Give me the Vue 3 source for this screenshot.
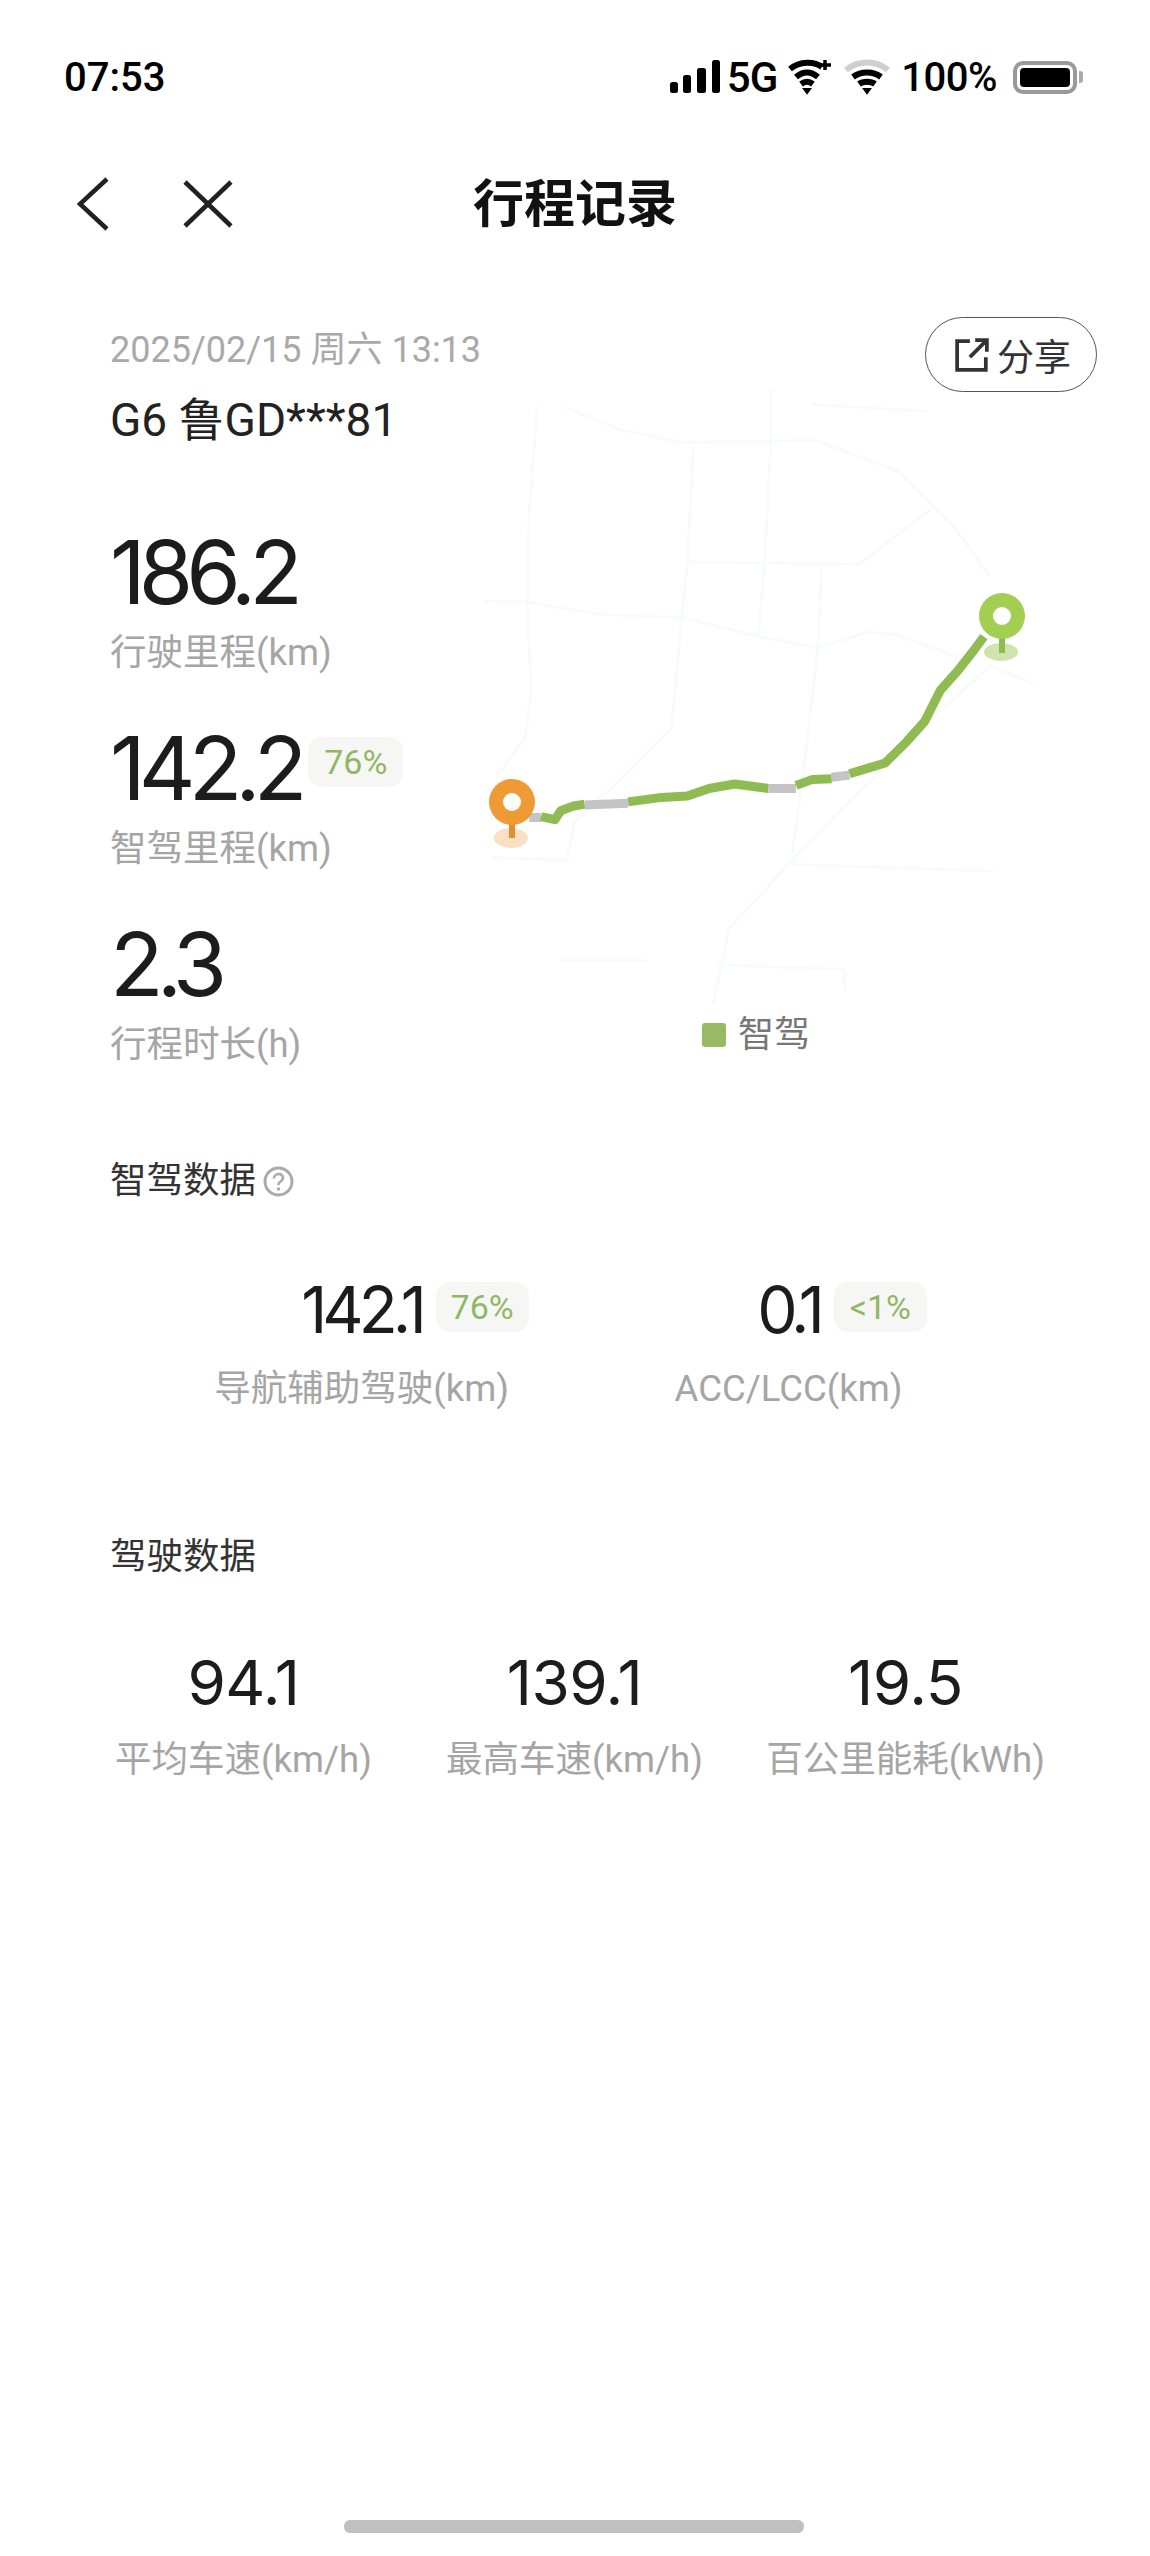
<script setup>
// 路线坐标按地图放大图取点，换算到 620x700 的 svg
const toPts = (list) =>
  list.map(([x, y]) => `${(x / 2.529).toFixed(1)},${(y / 2.24).toFixed(1)}`).join(" ");

const roads = [
  [[195, 60], [175, 300], [170, 500], [180, 700], [165, 800], [100, 880]],
  [[60, 495], [170, 497], [360, 525], [560, 532], [760, 575], [905, 600], [1030, 565], [1100, 570], [1260, 620]],
  [[265, 60], [400, 110], [560, 140], [900, 135], [1110, 205], [1250, 330], [1340, 440]],
  [[590, 150], [575, 410], [560, 540], [535, 780], [400, 900], [290, 990], [270, 1075], [80, 1070]],
  [[785, 20], [785, 160], [770, 410], [755, 570]],
  [[575, 408], [1010, 412], [1190, 290]],
  [[915, 415], [905, 600], [870, 870], [840, 1060]],
  [[1450, 680], [1340, 640], [1180, 770], [840, 1075], [680, 1230], [640, 1400]],
  [[840, 1085], [1350, 1100]],
  [[250, 1300], [470, 1300]],
  [[650, 1310], [970, 1320], [975, 1370]],
  [[890, 55], [1180, 70]],
].map(toPts);

const route = [
  { color: "#c4c4c4", pts: [[175, 980], [205, 980]] },
  { color: "#8fbb52", pts: [[205, 978], [240, 985], [255, 965], [285, 955], [315, 950]] },
  { color: "#c4c4c4", pts: [[315, 952], [425, 948]] },
  { color: "#8fbb52", pts: [[425, 945], [510, 935], [575, 932], [630, 915], [695, 905], [780, 915]] },
  { color: "#c4c4c4", pts: [[780, 915], [850, 915]] },
  { color: "#8fbb52", pts: [[850, 908], [890, 895], [940, 893]] },
  { color: "#c4c4c4", pts: [[940, 890], [985, 885]] },
  {
    color: "#8fbb52",
    pts: [[985, 882], [1030, 870], [1075, 858], [1130, 810], [1175, 765], [1215, 695], [1260, 650], [1300, 605], [1325, 575]],
  },
].map((seg) => ({ color: seg.color, points: toPts(seg.pts) }));

const tripStats = [
  { value: "186.2", label: "行驶里程(km)" },
  { value: "142.2", label: "智驾里程(km)", badge: "76%" },
  { value: "2.3", label: "行程时长(h)" },
];

const smartData = [
  { value: "142.1", label: "导航辅助驾驶(km)", badge: "76%" },
  { value: "0.1", label: "ACC/LCC(km)", badge: "<1%" },
];

const driveData = [
  { value: "94.1", label: "平均车速(km/h)" },
  { value: "139.1", label: "最高车速(km/h)" },
  { value: "19.5", label: "百公里能耗(kWh)" },
];
</script>

<template>
  <div class="page">
    <header class="status">
      <span class="time">07:53</span>
      <div class="status-right">
        <svg class="signal" width="50" height="34" viewBox="0 0 50 34">
          <rect x="0" y="22" width="8" height="11" rx="2.5" />
          <rect x="13" y="15" width="8" height="18" rx="2.5" />
          <rect x="27" y="8" width="9" height="25" rx="2.5" />
          <rect x="42" y="0" width="8" height="33" rx="2.5" />
        </svg>
        <span class="net">5G</span>
        <svg class="wifi-plus" width="44" height="36" viewBox="0 0 44 36" fill="none" stroke="#000" stroke-width="6">
          <path d="M2 10 C12 2 26 2 34 8" />
          <path d="M8 18 C15 12 23 12 30 18" />
          <path d="M13 25 C17 22 21 22 25 25" />
          <path d="M16 30 L19 34 L22 30 Z" fill="#000" stroke-width="2" />
          <path d="M37 1 V11 M32 6 H43" stroke-width="3.5" />
        </svg>
        <svg class="wifi" width="46" height="36" viewBox="0 0 46 36" fill="none" stroke-width="6">
          <path d="M2 11 C14 1 32 1 44 11" stroke="#cfcfcf" />
          <path d="M9 18 C17 12 29 12 37 18" stroke="#000" />
          <path d="M15 25 C19 22 27 22 31 25" stroke="#000" />
          <path d="M20 30 L23 34 L26 30 Z" fill="#000" stroke="#000" stroke-width="2" />
        </svg>
        <span class="percent">100%</span>
        <div class="battery"><i></i></div>
      </div>
    </header>

    <nav class="nav">
      <div class="nav-left">
        <svg width="32" height="54" viewBox="0 0 32 54" fill="none" stroke="#222" stroke-width="4.5">
          <path d="M30 2 L3 27 L30 52" />
        </svg>
        <svg width="50" height="48" viewBox="0 0 50 48" fill="none" stroke="#222" stroke-width="4.5">
          <path d="M2 2 L48 46 M48 2 L2 46" />
        </svg>
      </div>
      <h1>行程记录</h1>
    </nav>

    <section class="trip">
      <svg class="map" width="620" height="700" viewBox="0 0 620 700" fill="none">
        <polyline v-for="(r, i) in roads" :key="i" :points="r" stroke="#f9fbfb" stroke-width="3" />
        <polyline
          v-for="(seg, i) in route"
          :key="'s' + i"
          :points="seg.points"
          :stroke="seg.color"
          stroke-width="9"
          stroke-linejoin="round"
        />
        <ellipse cx="51" cy="458" rx="17" ry="10" fill="#f9dfc4" />
        <rect x="49" y="442" width="6" height="16" fill="#e08f32" />
        <circle cx="52" cy="422" r="23" fill="#f09a35" />
        <circle cx="52" cy="422" r="9" fill="#fff" />
        <ellipse cx="541" cy="272" rx="17" ry="9" fill="#cfe3ac" />
        <rect x="539" y="256" width="6" height="17" fill="#8fbb52" />
        <circle cx="542" cy="236" r="23" fill="#a2cf52" />
        <circle cx="542" cy="236" r="9" fill="#fff" />
      </svg>

      <button class="share">
        <svg width="34" height="34" viewBox="0 0 32 32" fill="none" stroke="#333" stroke-width="3.5">
          <path d="M14 3 H2 V30 H29 V18" />
          <path d="M14 18 L29 3 M19 2 H30 V13" />
        </svg>
        <span>分享</span>
      </button>

      <div class="date">2025/02/15 周六 13:13</div>
      <div class="car">G6 鲁GD***81</div>

      <div class="stat" v-for="item in tripStats" :key="item.label">
        <div class="stat-value">
          <span class="num-big">{{ item.value }}</span>
          <span v-if="item.badge" class="badge badge-inline">{{ item.badge }}</span>
        </div>
        <div class="label">{{ item.label }}</div>
      </div>

      <div class="legend"><i></i>智驾</div>
    </section>

    <section class="block">
      <h2>
        智驾数据
        <svg width="31" height="31" viewBox="0 0 31 31" fill="none" stroke="#aaa" stroke-width="3">
          <circle cx="15.5" cy="15.5" r="13.5" />
          <path d="M11 12.5 C11 6.5 20 6.5 20 12 C20 15.5 15.5 15 15.5 19" stroke-width="2.6" />
          <circle cx="15.5" cy="23" r="1" stroke-width="1.6" />
        </svg>
      </h2>
      <div class="smart-grid">
        <div class="cell" v-for="item in smartData" :key="item.label">
          <div class="cell-value">
            <span class="num-mid">{{ item.value }}</span>
            <span class="badge badge-float">{{ item.badge }}</span>
          </div>
          <div class="label">{{ item.label }}</div>
        </div>
      </div>
    </section>

    <section class="block drive">
      <h2>驾驶数据</h2>
      <div class="drive-grid">
        <div class="cell" v-for="item in driveData" :key="item.label">
          <div class="cell-value">
            <span class="num-small">{{ item.value }}</span>
          </div>
          <div class="label">{{ item.label }}</div>
        </div>
      </div>
    </section>

    <div class="home-bar"></div>
  </div>
</template>

<style>
body {
  background: #fff;
}
</style>

<style scoped>
.page {
  position: relative;
  width: 1150px;
  height: 2556px;
  background: #fff;
  overflow: hidden;
  font-family: Roboto, "Noto Sans CJK SC", sans-serif;
  color: #1c1c1c;
}

.status {
  display: flex;
  justify-content: space-between;
  align-items: center;
  height: 50px;
  margin-top: 52px;
  padding: 0 73px 0 64px;
}

.time {
  font-size: 40px;
  font-weight: 500;
  color: #000;
}

.status-right {
  display: flex;
  align-items: center;
  color: #000;
  font-size: 40px;
  font-weight: 500;
}

.net {
  margin-left: 7px;
  font-size: 42px;
  letter-spacing: -1px;
}

.wifi-plus {
  margin-left: 11px;
}

.wifi {
  margin-left: 12px;
}

.percent {
  margin-left: 11px;
  letter-spacing: -0.5px;
}

.battery {
  position: relative;
  width: 64px;
  height: 33px;
  margin-left: 16px;
  border: 4px solid #999;
  border-radius: 10px;
  box-sizing: border-box;
  padding: 3px;
}

.battery i {
  display: block;
  height: 100%;
  background: #000;
  border-radius: 4px;
}

.battery::after {
  content: "";
  position: absolute;
  right: -10px;
  top: 6px;
  width: 4px;
  height: 12px;
  background: #aaa;
  border-radius: 0 3px 3px 0;
}

.nav {
  position: relative;
  display: flex;
  justify-content: center;
  align-items: center;
  height: 60px;
  margin-top: 73px;
}

.nav-left {
  position: absolute;
  left: 77px;
  top: 2px;
  display: flex;
  align-items: center;
  gap: 74px;
}

h1 {
  margin: 0;
  font-size: 51px;
  font-weight: 700;
  line-height: 60px;
  color: #111;
}

.trip {
  position: relative;
  height: 921px;
  padding: 93px 0 0 110px;
  box-sizing: border-box;
}

.map {
  position: absolute;
  left: 460px;
  top: 145px;
}

.share {
  position: absolute;
  left: 925px;
  top: 82px;
  display: flex;
  align-items: center;
  gap: 8px;
  width: 172px;
  height: 75px;
  padding: 0 0 0 29px;
  border: 1.5px solid #555;
  border-radius: 38px;
  background: #fff;
  box-sizing: border-box;
  font-family: inherit;
  font-size: 37px;
  color: #333;
}

.date {
  font-size: 36px;
  line-height: 44px;
  color: #a9a9a9;
}

.car {
  margin-top: 22px;
  font-size: 46px;
  line-height: 52px;
  color: #222;
}

.stat {
  margin-top: 40px;
}

.car + .stat {
  margin-top: 76px;
}

.stat-value {
  display: flex;
  align-items: center;
  height: 100px;
  gap: 6px;
}

.num-big {
  font-family: Inter, sans-serif;
  font-size: 88px;
  line-height: 100px;
  letter-spacing: -7px;
  color: #1c1c1c;
}

.num-mid {
  font-family: Inter, sans-serif;
  font-size: 64px;
  line-height: 70px;
  letter-spacing: -5px;
  color: #1c1c1c;
}

.num-small {
  font-family: Inter, sans-serif;
  font-size: 62px;
  line-height: 70px;
  letter-spacing: -0.5px;
  color: #1c1c1c;
}

.badge {
  display: flex;
  align-items: center;
  justify-content: center;
  width: 95px;
  height: 50px;
  border-radius: 14px;
  background: #f6f7f5;
  font-size: 34px;
  color: #8fb766;
}

.badge-inline {
  margin: 0 0 12px 2px;
}

.label {
  margin-top: 6px;
  font-size: 36.5px;
  line-height: 50px;
  color: #a5a5a5;
}

.cell .label {
  margin-top: 19px;
}

.drive .cell .label {
  margin-top: 17px;
}

.legend {
  position: absolute;
  left: 702px;
  top: 775px;
  display: flex;
  align-items: center;
  gap: 12px;
  font-size: 36px;
  line-height: 50px;
  color: #777;
}

.legend i {
  width: 24px;
  height: 24px;
  border-radius: 3px;
  background: #98ba64;
}

.block {
  padding: 0 78px;
}

h2 {
  display: flex;
  align-items: center;
  gap: 7px;
  margin: 0;
  padding-left: 32px;
  font-size: 36.5px;
  font-weight: 400;
  line-height: 50px;
  color: #333;
}

.smart-grid {
  display: grid;
  grid-template-columns: 427px 427px;
  margin: 69px 0 0 70px;
}

.drive {
  margin-top: 118px;
}

.drive-grid {
  display: grid;
  grid-template-columns: repeat(3, 331px);
  margin-top: 66px;
}

.cell {
  display: flex;
  flex-direction: column;
  align-items: center;
}

.cell-value {
  position: relative;
  line-height: 70px;
  height: 70px;
}

.badge-float {
  position: absolute;
  left: 100%;
  top: 7px;
  width: 93px;
  margin-left: 14px;
}

.home-bar {
  position: absolute;
  left: 344px;
  bottom: 23px;
  width: 460px;
  height: 13px;
  border-radius: 6px;
  background: #c0c0c0;
}
</style>
